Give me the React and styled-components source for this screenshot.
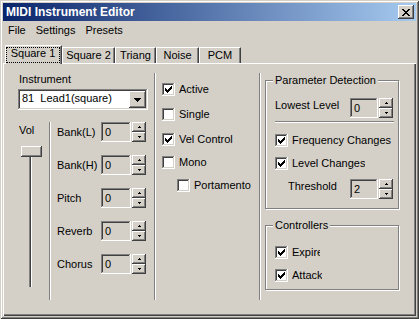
import React from 'react';
import styled, { createGlobalStyle, css } from 'styled-components';

const FACE = '#d4d0c8';

const GlobalStyle = createGlobalStyle`
  html, body { margin: 0; padding: 0; background: ${FACE}; }
  body { font: 11px "Liberation Sans", Arial, sans-serif; color: #000; }
  *, *::before, *::after { box-sizing: border-box; }
`;

const raised = css`
  background: ${FACE};
  box-shadow: inset -1px -1px #404040, inset 1px 1px #fff, inset -2px -2px #808080;
`;

const sunken = css`
  box-shadow: inset -1px -1px #fff, inset 1px 1px #808080, inset -2px -2px ${FACE}, inset 2px 2px #404040;
`;

// little pixel drawings (classic win32 glyphs)
const CHECK = ['......X', '.....XX', 'X...XXX', 'XX.XXX.', 'XXXXX..', '.XXX...', '..X....'];
const CLOSE = ['XX....XX', '.XX..XX.', '..XXXX..', '...XX...', '..XXXX..', '.XX..XX.', 'XX....XX'];
const DROP = ['XXXXXXX', '.XXXXX.', '..XXX..', '...X...'];
const UP = ['.X.', 'XXX'];
const DOWN = ['XXX', '.X.'];

const PixSvg = styled.svg`
  display: block;
  flex-shrink: 0;
`;

const Pix = ({ rows }) => (
  <PixSvg width={rows[0].length} height={rows.length} shapeRendering="crispEdges">
    {rows.map((row, y) =>
      [...row].map((c, x) =>
        c === 'X' ? <rect key={x + '-' + y} x={x} y={y} width="1" height="1" fill="#000" /> : null
      )
    )}
  </PixSvg>
);

const Window = styled.div`
  width: 419px;
  height: 319px;
  padding: 3px;
  display: flex;
  flex-direction: column;
  background: ${FACE};
  box-shadow: inset 1px 1px ${FACE}, inset -1px -1px #404040, inset 2px 2px #fff, inset -2px -2px #808080;
`;

const TitleBar = styled.div`
  height: 18px;
  flex-shrink: 0;
  display: flex;
  align-items: flex-start;
  justify-content: space-between;
  padding-left: 3px;
  background: linear-gradient(to right, #0a246a, #a6caf0);
`;

const Title = styled.span`
  color: #fff;
  font-weight: bold;
  font-size: 12px;
  line-height: 18px;
`;

const CloseBtn = styled.div`
  ${raised};
  width: 16px;
  height: 14px;
  margin: 2px 2px 0 0;
  display: flex;
  align-items: center;
  justify-content: center;
`;

const MenuBar = styled.div`
  height: 19px;
  flex-shrink: 0;
  display: flex;
`;

const MenuItem = styled.span`
  padding: 0 5px;
  line-height: 19px;
`;

const TabRow = styled.div`
  height: 23px;
  flex-shrink: 0;
  display: flex;
  align-items: flex-end;
  padding-left: 2px;
`;

const Tab = styled.div`
  width: ${p => p.$w}px;
  height: 16px;
  padding-top: 1px;
  border-left: 1px solid #fff;
  border-top: 1px solid #fff;
  border-right: 1px solid #404040;
  box-shadow: inset -1px 0 #808080;
  text-align: center;
  line-height: 13px;
  white-space: nowrap;
  ${p => p.$active && css`
    height: 19px;
    margin-bottom: -1px;
    padding: 1px 1px 0 0;
    position: relative;
    z-index: 1;
    background: ${FACE};
  `}
`;

const FocusRect = styled.span`
  display: block;
  height: 16px;
  border: 1px dotted #000;
  line-height: 11px;
`;

const Panel = styled.div`
  flex: 1;
  display: flex;
  align-items: flex-start;
  padding-top: 10px;
  box-shadow: inset 1px 1px #fff, inset -1px -1px #404040, inset -2px -2px #808080;
`;

const VDivider = styled.div`
  width: 2px;
  height: ${p => p.$h}px;
  flex-shrink: 0;
  border-left: 1px solid #808080;
  border-right: 1px solid #fff;
`;

const LeftCol = styled.div`
  width: 151px;
  flex-shrink: 0;
`;

const FieldLabel = styled.div`
  line-height: 13px;
  margin-left: ${p => p.$ml || 0}px;
`;

const Combo = styled.div`
  ${sunken};
  background: #fff;
  width: 130px;
  height: 21px;
  margin: 3px 0 0 15px;
  padding: 2px;
  display: flex;
`;

const ComboText = styled.span`
  flex: 1;
  padding-left: 2px;
  line-height: 15px;
  white-space: pre;
`;

const DropBtn = styled.div`
  ${raised};
  width: 17px;
  height: 17px;
  display: flex;
  align-items: center;
  justify-content: center;
`;

const LowerLeft = styled.div`
  display: flex;
  align-items: flex-start;
  margin-top: 12px;
`;

const VolArea = styled.div`
  width: 46px;
  flex-shrink: 0;
  padding: 2px 0 0 16px;
`;

const Slider = styled.div`
  position: relative;
  width: 21px;
  height: 145px;
  margin: 9px 0 0 2px;
`;

const Track = styled.div`
  width: 3px;
  height: 141px;
  margin: 4px 0 0 8px;
  background: #404040;
  border-left: 1px solid #808080;
  border-right: 1px solid #fff;
`;

const Thumb = styled.div`
  ${raised};
  position: absolute;
  top: 0;
  left: 0;
  width: 21px;
  height: 11px;
`;

const SpinList = styled.div`
  display: flex;
  flex-direction: column;
  gap: 13px;
  padding-left: 6px;
`;

const SpinRow = styled.div`
  display: flex;
  align-items: flex-start;
  height: 20px;
  margin: ${p => p.$mt || 0}px 0 0 ${p => p.$ml || 0}px;
`;

const RowLabel = styled.span`
  width: ${p => p.$w}px;
  flex-shrink: 0;
  padding-top: ${p => p.$pt}px;
  line-height: 13px;
  white-space: nowrap;
`;

const SpinField = styled.div`
  display: flex;
  gap: 1px;
`;

const EditBox = styled.div`
  ${sunken};
  width: ${p => p.$w}px;
  height: 20px;
  padding: 2px 0 0 4px;
  line-height: 16px;
  background: ${FACE};
`;

const SpinBox = styled.div`
  width: 14px;
  display: flex;
  flex-direction: column;
`;

const SpinBtn = styled.div`
  ${raised};
  height: 10px;
  display: flex;
  align-items: center;
  justify-content: center;
`;

const MidCol = styled.div`
  width: 103px;
  flex-shrink: 0;
  padding-left: 6px;
`;

const CheckRow = styled.div`
  display: flex;
  align-items: center;
  height: 13px;
  margin: ${p => p.$mt || 0}px 0 0 ${p => p.$ml || 0}px;
`;

const CheckBox = styled.div`
  ${sunken};
  width: 13px;
  height: 13px;
  flex-shrink: 0;
  background: #fff;
  display: flex;
  align-items: center;
  justify-content: center;
`;

const CheckLabel = styled.span`
  margin-left: 4px;
  line-height: 13px;
  white-space: nowrap;
  overflow: hidden;
  ${p => p.$clip && css`max-width: ${p.$clip}px;`}
`;

const RightCol = styled.div`
  flex: 1;
`;

const GroupBox = styled.div`
  position: relative;
  width: 134px;
  height: ${p => p.$h}px;
  margin: ${p => p.$mt}px 0 0 4px;
  padding: ${p => p.$pt}px 4px 0 9px;
  border: 1px solid #808080;
  box-shadow: inset 1px 1px #fff, 1px 1px #fff;
`;

const GroupTitle = styled.span`
  position: absolute;
  top: -7px;
  left: 7px;
  padding: 0 2px;
  line-height: 13px;
  background: ${FACE};
  white-space: nowrap;
`;

const HSeparator = styled.div`
  height: 2px;
  margin-top: 3px;
  border-top: 1px solid #808080;
  border-bottom: 1px solid #fff;
`;

const Check = ({ checked, label, mt, ml, clip }) => (
  <CheckRow $mt={mt} $ml={ml}>
    <CheckBox>{checked && <Pix rows={CHECK} />}</CheckBox>
    <CheckLabel $clip={clip}>{label}</CheckLabel>
  </CheckRow>
);

const Spinner = ({ value, w }) => (
  <SpinField>
    <EditBox $w={w}>{value}</EditBox>
    <SpinBox>
      <SpinBtn><Pix rows={UP} /></SpinBtn>
      <SpinBtn><Pix rows={DOWN} /></SpinBtn>
    </SpinBox>
  </SpinField>
);

const tabs = [
  { name: 'Square 1', w: 57, active: true },
  { name: 'Square 2', w: 53 },
  { name: 'Triang', w: 41 },
  { name: 'Noise', w: 43 },
  { name: 'PCM', w: 42 },
];

const spinRows = ['Bank(L)', 'Bank(H)', 'Pitch', 'Reverb', 'Chorus'];

export default function App() {
  return (
    <>
      <GlobalStyle />
      <Window>
        <TitleBar>
          <Title>MIDI Instrument Editor</Title>
          <CloseBtn><Pix rows={CLOSE} /></CloseBtn>
        </TitleBar>
        <MenuBar>
          <MenuItem>File</MenuItem>
          <MenuItem>Settings</MenuItem>
          <MenuItem>Presets</MenuItem>
        </MenuBar>
        <TabRow>
          {tabs.map(t => (
            <Tab key={t.name} $w={t.w} $active={t.active}>
              {t.active ? <FocusRect>{t.name}</FocusRect> : t.name}
            </Tab>
          ))}
        </TabRow>
        <Panel>
          <LeftCol>
            <FieldLabel $ml={16}>Instrument</FieldLabel>
            <Combo>
              <ComboText>81  Lead1(square)</ComboText>
              <DropBtn><Pix rows={DROP} /></DropBtn>
            </Combo>
            <LowerLeft>
              <VolArea>
                <FieldLabel>Vol</FieldLabel>
                <Slider>
                  <Track />
                  <Thumb />
                </Slider>
              </VolArea>
              <VDivider $h={178} />
              <SpinList>
                {spinRows.map(name => (
                  <SpinRow key={name}>
                    <RowLabel $w={44} $pt={4}>{name}</RowLabel>
                    <Spinner value="0" w={30} />
                  </SpinRow>
                ))}
              </SpinList>
            </LowerLeft>
          </LeftCol>
          <VDivider $h={227} />
          <MidCol>
            <Check checked label="Active" mt={10} />
            <Check label="Single" mt={12} />
            <Check checked label="Vel Control" mt={12} />
            <Check label="Mono" mt={10} />
            <Check label="Portamento" mt={10} ml={15} />
          </MidCol>
          <VDivider $h={227} />
          <RightCol>
            <GroupBox $h={129} $mt={7} $pt={17}>
              <GroupTitle>Parameter Detection</GroupTitle>
              <SpinRow>
                <RowLabel $w={75} $pt={1}>Lowest Level</RowLabel>
                <Spinner value="0" w={28} />
              </SpinRow>
              <HSeparator />
              <Check checked label="Frequency Changes" mt={11} />
              <Check checked label="Level Changes" mt={10} />
              <SpinRow $mt={9} $ml={13}>
                <RowLabel $w={62} $pt={1}>Threshold</RowLabel>
                <Spinner value="2" w={28} />
              </SpinRow>
            </GroupBox>
            <GroupBox $h={65} $mt={16} $pt={20}>
              <GroupTitle>Controllers</GroupTitle>
              <Check checked label="Expire" clip={28} />
              <Check checked label="Attack" mt={10} clip={30} />
            </GroupBox>
          </RightCol>
        </Panel>
      </Window>
    </>
  );
}
